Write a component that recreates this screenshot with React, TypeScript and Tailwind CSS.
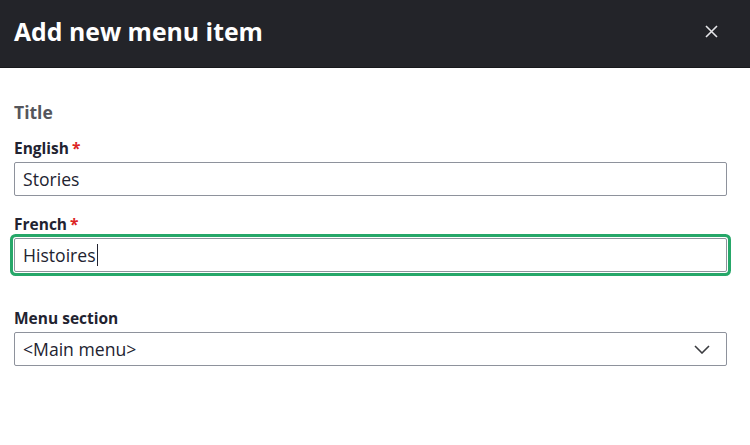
import React from 'react';

const font = { fontFamily: '"Open Sans", "Noto Sans", sans-serif' };

const Label: React.FC<{ text: string; required?: boolean }> = ({ text, required }) => (
  <label className="flex items-center text-[15.5px] font-bold leading-[20px] text-[#222330]">
    {text}
    {required && <span className="ml-[3px] text-[#dc2323]">*</span>}
  </label>
);

const inputBox = 'h-[34px] border border-[#8e929c] rounded-[2px] flex items-center px-[8px] text-[17.6px] text-[#222330] bg-white';

export default function App() {
  return (
    <div style={font} className="w-[750px] h-[445px] bg-white overflow-hidden">
      <header className="h-[68px] bg-[#232429] border-b border-[#18191c] flex items-center justify-between pl-[14px] pr-[32px]">
        <h1 className="text-[24.8px] font-bold text-white leading-none -mt-[4px]">Add new menu item</h1>
        <button className="w-[14px] h-[14px] flex items-center justify-center text-[#e6e6e9] -mt-[4px]">
          <svg width="13" height="13" viewBox="0 0 13 13" fill="none" stroke="currentColor" strokeWidth="1.6">
            <path d="M1 1L12 12M12 1L1 12" />
          </svg>
        </button>
      </header>

      <div className="pl-[14px] pr-[23px] pt-[33px]">
        <h2 className="text-[17.5px] font-bold text-[#55565b] leading-[22px]">Title</h2>

        <div className="mt-[15px]">
          <Label text="English" required />
          <div className={`mt-[4px] ${inputBox}`}>Stories</div>
        </div>

        <div className="mt-[18px]">
          <Label text="French" required />
          <div className={`mt-[4px] ${inputBox} ring-[3px] ring-[#26a769] ring-offset-[1px] ring-offset-white`}>
            Histoires
            <span className="ml-[1px] w-[1.5px] h-[22px] bg-[#222330]" />
          </div>
        </div>

        <div className="mt-[36px]">
          <Label text="Menu section" />
          <div className={`mt-[4px] ${inputBox} justify-between pr-[16px]`}>
            &lt;Main menu&gt;
            <svg width="16" height="9" viewBox="0 0 16 9" fill="none" stroke="#3b3c40" strokeWidth="1.6">
              <path d="M1 1L8 8L15 1" />
            </svg>
          </div>
        </div>
      </div>
    </div>
  );
}
